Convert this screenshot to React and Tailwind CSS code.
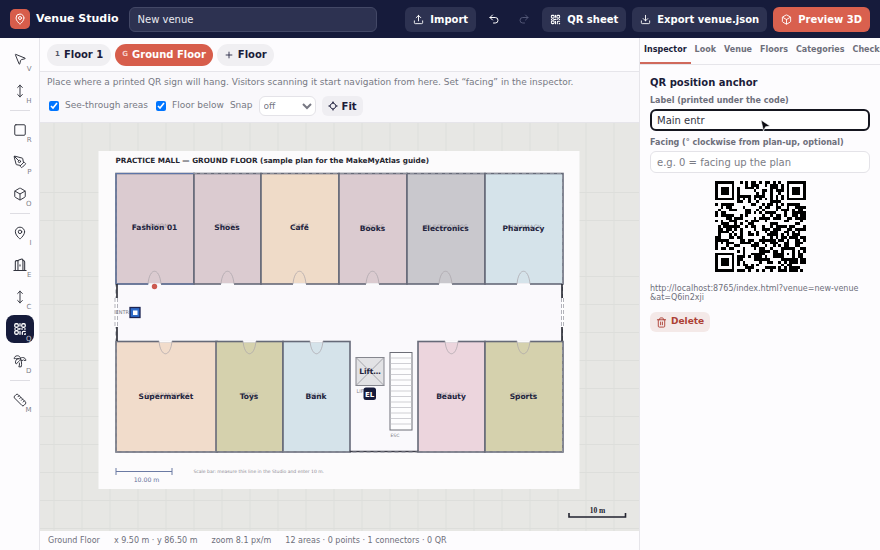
import React, { useState, useMemo } from "react";
import {
  Box,
  Download,
  MapPin,
  MousePointer2,
  MoveVertical,
  PenTool,
  Plus,
  Redo2,
  Ruler,
  Square,
  Trash2,
  TreePalm,
  Undo2,
  Upload,
} from "lucide-react";

const QR_SIZE = 33;

// GF(256) multiply used by the Reed-Solomon step
function gfMul(a, b) {
  let r = 0;
  for (let i = 7; i >= 0; i--) {
    r = (r << 1) ^ ((r >>> 7) * 0x11d);
    r ^= ((b >>> i) & 1) * a;
  }
  return r;
}

function rsRemainder(data, degree) {
  const gen = new Array(degree).fill(0);
  gen[degree - 1] = 1;
  let root = 1;
  for (let i = 0; i < degree; i++) {
    for (let j = 0; j < degree; j++) {
      gen[j] = gfMul(gen[j], root);
      if (j + 1 < degree) gen[j] ^= gen[j + 1];
    }
    root = gfMul(root, 2);
  }
  const rem = new Array(degree).fill(0);
  data.forEach((b) => {
    const factor = b ^ rem.shift();
    rem.push(0);
    gen.forEach((c, i) => {
      rem[i] ^= gfMul(c, factor);
    });
  });
  return rem;
}

// Version 4, level M: two blocks of 32 data bytes with 18 check bytes each
function qrCodewords(text) {
  const bits = [];
  const push = (val, len) => {
    for (let i = len - 1; i >= 0; i--) bits.push((val >>> i) & 1);
  };
  push(4, 4);
  push(text.length, 8);
  for (const ch of text) push(ch.charCodeAt(0), 8);
  push(0, Math.min(4, 512 - bits.length));
  while (bits.length % 8) bits.push(0);
  const bytes = [];
  for (let i = 0; i < bits.length; i += 8) {
    bytes.push(parseInt(bits.slice(i, i + 8).join(""), 2));
  }
  for (let pad = 0xec; bytes.length < 64; pad ^= 0xec ^ 0x11) bytes.push(pad);
  const a = bytes.slice(0, 32);
  const b = bytes.slice(32);
  const ea = rsRemainder(a, 18);
  const eb = rsRemainder(b, 18);
  const out = [];
  a.forEach((v, i) => out.push(v, b[i]));
  ea.forEach((v, i) => out.push(v, eb[i]));
  return out;
}

const MASKS = [
  (x, y) => (x + y) % 2 === 0,
  (x, y) => y % 2 === 0,
  (x) => x % 3 === 0,
  (x, y) => (x + y) % 3 === 0,
  (x, y) => (Math.floor(x / 3) + Math.floor(y / 2)) % 2 === 0,
  (x, y) => ((x * y) % 2) + ((x * y) % 3) === 0,
  (x, y) => (((x * y) % 2) + ((x * y) % 3)) % 2 === 0,
  (x, y) => (((x + y) % 2) + ((x * y) % 3)) % 2 === 0,
];

function buildMatrix(codewords, mask) {
  const n = QR_SIZE;
  const grid = Array.from({ length: n }, () => new Array(n).fill(null));
  const set = (x, y, v) => {
    if (x >= 0 && y >= 0 && x < n && y < n) grid[y][x] = v ? 1 : 0;
  };
  for (let i = 0; i < n; i++) {
    set(6, i, i % 2 === 0);
    set(i, 6, i % 2 === 0);
  }
  [[3, 3], [n - 4, 3], [3, n - 4]].forEach(([cx, cy]) => {
    for (let dy = -4; dy <= 4; dy++)
      for (let dx = -4; dx <= 4; dx++) {
        const d = Math.max(Math.abs(dx), Math.abs(dy));
        set(cx + dx, cy + dy, d !== 2 && d !== 4);
      }
  });
  for (let dy = -2; dy <= 2; dy++)
    for (let dx = -2; dx <= 2; dx++)
      set(26 + dx, 26 + dy, Math.max(Math.abs(dx), Math.abs(dy)) !== 1);

  let rem = mask;
  for (let i = 0; i < 10; i++) rem = (rem << 1) ^ ((rem >>> 9) * 0x537);
  const fmt = ((mask << 10) | rem) ^ 0x5412;
  const bit = (i) => (fmt >>> i) & 1;
  for (let i = 0; i <= 5; i++) set(8, i, bit(i));
  set(8, 7, bit(6));
  set(8, 8, bit(7));
  set(7, 8, bit(8));
  for (let i = 9; i < 15; i++) set(14 - i, 8, bit(i));
  for (let i = 0; i < 8; i++) set(n - 1 - i, 8, bit(i));
  for (let i = 8; i < 15; i++) set(8, n - 15 + i, bit(i));
  set(8, n - 8, 1);

  let k = 0;
  for (let right = n - 1; right >= 1; right -= 2) {
    if (right === 6) right = 5;
    for (let v = 0; v < n; v++)
      for (let j = 0; j < 2; j++) {
        const x = right - j;
        const up = ((right + 1) & 2) === 0;
        const y = up ? n - 1 - v : v;
        if (grid[y][x] !== null) continue;
        const byte = codewords[k >>> 3] || 0;
        const value = (byte >>> (7 - (k & 7))) & 1;
        grid[y][x] = value ^ (MASKS[mask](x, y) ? 1 : 0);
        k++;
      }
  }
  return grid;
}

function penalty(grid) {
  const n = QR_SIZE;
  const cols = grid.map((_, x) => grid.map((row) => row[x]));
  let score = 0;
  [...grid, ...cols].forEach((line) => {
    const s = line.join("");
    (s.match(/0{5,}|1{5,}/g) || []).forEach((m) => {
      score += m.length - 2;
    });
    for (let i = 0; i + 11 <= n; i++) {
      const part = s.slice(i, i + 11);
      if (part === "10111010000" || part === "00001011101") score += 40;
    }
  });
  for (let y = 0; y < n - 1; y++)
    for (let x = 0; x < n - 1; x++) {
      const sum =
        grid[y][x] + grid[y][x + 1] + grid[y + 1][x] + grid[y + 1][x + 1];
      if (sum === 0 || sum === 4) score += 3;
    }
  const dark = grid.flat().reduce((a, b) => a + b, 0);
  score += Math.floor(Math.abs((dark * 100) / (n * n) - 50) / 5) * 10;
  return score;
}

function QrCode({ text }) {
  const path = useMemo(() => {
    const words = qrCodewords(text);
    const best = MASKS.map((_, m) => buildMatrix(words, m)).sort(
      (a, b) => penalty(a) - penalty(b),
    )[0];
    return best
      .flatMap((row, y) => row.map((v, x) => (v ? `M${x} ${y}h1v1h-1z` : "")))
      .join("");
  }, [text]);

  return (
    <svg
      viewBox="0 0 33 33"
      className="w-[91px] h-[91px]"
      shapeRendering="crispEdges"
      role="img"
      aria-label="QR code"
    >
      <path d={path} fill="#000" />
    </svg>
  );
}

function QrIcon({ size = 14 }) {
  return (
    <svg width={size} height={size} viewBox="0 0 24 24" fill="none" stroke="currentColor" strokeWidth="2.2" strokeLinecap="round" strokeLinejoin="round">
      <rect x="3" y="3" width="6" height="6" rx="2" />
      <rect x="15" y="3" width="6" height="6" rx="2" />
      <rect x="3" y="15" width="6" height="6" rx="2" />
      <path d="M12 3v4M12 11v1H8M3 12h1M21 12h-1M16 12h-1M16 21v-3c0-1.500.5-2 2-2h3M21 20v1h-1M12 16v5" />
    </svg>
  );
}

function DoorIcon({ size = 14 }) {
  return (
    <svg width={size} height={size} viewBox="0 0 24 24" fill="none" stroke="currentColor" strokeWidth="1.8" strokeLinecap="round" strokeLinejoin="round">
      <path d="M1.5 21.500h21M4 21.500V6.500a2 2 0 0 1 2-2h2.500M17 4.500a2.500 2.500 0 0 1 3 2.500v14.500" />
      <path d="M8.500 21.500V5.500c0-1 .5-1.600 1.500-2l4-1.400c1.800-.6 3 0 3 1.700v17.700M12 11.500v2" />
    </svg>
  );
}

function FitIcon() {
  return (
    <svg width="10" height="10" viewBox="0 0 24 24" fill="none" stroke="currentColor" strokeWidth="2.4" strokeLinecap="round" strokeLinejoin="round">
      <path d="M12 4.500c3.500 1 6.500 4 7.500 7.500-1 3.500-4 6.500-7.500 7.500-3.500-1-6.500-4-7.500-7.500 1-3.500 4-6.500 7.500-7.500z" />
      <path d="M12 2v3M12 19v3M2 12h3M19 12h3" />
    </svg>
  );
}

const toolGroups = [
  [
    { key: "V", name: "Select", icon: MousePointer2 },
    { key: "H", name: "Pan", icon: MoveVertical },
  ],
  [
    { key: "R", name: "Rectangle", icon: Square },
    { key: "P", name: "Polygon", icon: PenTool },
    { key: "O", name: "Object", icon: Box },
  ],
  [
    { key: "I", name: "Point", icon: MapPin },
    { key: "E", name: "Entrance", icon: DoorIcon },
    { key: "C", name: "Connector", icon: MoveVertical },
    { key: "Q", name: "QR anchor", icon: QrIcon },
    { key: "D", name: "Decor", icon: TreePalm },
  ],
  [{ key: "M", name: "Measure", icon: Ruler }],
];

function ToolRail({ tool, onSelect }) {
  return (
    <nav className="w-10 shrink-0 border-r border-[#e6e5ea] bg-[#fdfcfe] flex flex-col items-center gap-1 pt-[7px]">
      {toolGroups.map((group, i) => (
        <React.Fragment key={i}>
          {i > 0 && <div className="w-5 h-px my-px shrink-0 bg-[#dedde3]" />}
          {group.map(({ key, name, icon: Icon }) => (
            <button
              key={key}
              aria-label={name}
              onClick={() => onSelect(key)}
              className={`relative w-7 h-7 shrink-0 rounded-lg flex items-center justify-center ${
                tool === key ? "bg-[#161b3b] text-white" : "text-[#33353f]"
              }`}
            >
              <Icon size={14} strokeWidth={1.7} />
              <span
                className={`absolute right-0.5 bottom-0 text-[7px] leading-2 ${
                  tool === key ? "text-[#c5c7d3]" : "text-[#7f808a]"
                }`}
              >
                {key}
              </span>
            </button>
          ))}
        </React.Fragment>
      ))}
    </nav>
  );
}

const rooms = [
  { name: "Fashion 01", print: "FASHION", x: 116, w: 78, top: true, door: 155, fill: "#dbcbd0" },
  { name: "Shoes", print: "SHOES", x: 194, w: 67, top: true, door: 228, fill: "#dbcbd0" },
  { name: "Café", print: "CAFE", x: 261, w: 78, top: true, door: 300, fill: "#efdbc8" },
  { name: "Books", print: "BOOKS", x: 339, w: 68, top: true, door: 373, fill: "#dbcbd0" },
  { name: "Electronics", print: "ELECTRONICS", x: 407, w: 78, top: true, door: 446, fill: "#c9c8cd" },
  { name: "Pharmacy", print: "PHARMACY", x: 485, w: 78, top: true, door: 524, fill: "#d5e3ea" },
  { name: "Supermarket", print: "SUPERMARKET", x: 116, w: 101, door: 166, fill: "#f1dccb" },
  { name: "Toys", print: "TOYS", x: 216, w: 67, door: 250, fill: "#d5d1ad" },
  { name: "Bank", print: "BANK", x: 283, w: 67, door: 317, fill: "#d5e3ea" },
  { name: "Beauty", print: "BEAUTY", x: 418, w: 67, door: 452, fill: "#ecd5dd" },
  { name: "Sports", print: "SPORTS", x: 485, w: 78, door: 524, fill: "#d5d1ad" },
];

function Room({ room }) {
  const y = room.top ? 173 : 341;
  const doorY = room.top ? 284 : 341;
  const tip = room.top ? 267 : 358;
  const cx = room.x + room.w / 2;
  const labelY = room.top ? (room.x < 339 ? 230 : 231) : 399;
  return (
    <g>
      <rect x={room.x + 0.5} y={y + 0.5} width={room.w} height={110.5} fill={room.fill} stroke="#666a78" strokeWidth="1.6" />
      <path d={`M${room.door - 6.5} ${doorY + 0.3}h13`} stroke="#fbfafc" strokeWidth="2.4" />
      <path
        d={`M${room.door - 6.5} ${doorY}C${room.door - 5} ${tip} ${room.door + 5} ${tip} ${room.door + 6.5} ${doorY}`}
        fill="none"
        stroke="#a9a3a9"
        strokeWidth="0.7"
      />
      <text x={cx + 1} y={labelY - 2} textAnchor="middle" fontSize="6" fill="#8a8790" opacity="0.8">
        {room.print}
      </text>
      <text x={cx} y={labelY} textAnchor="middle" fontSize="7.5" fontWeight="700" fill="#23243d">
        {room.name}
      </text>
    </g>
  );
}

function FloorPlan() {
  return (
    <svg
      viewBox="40 123 600 408"
      preserveAspectRatio="xMidYMid slice"
      className="absolute inset-0 w-full h-full"
    >
      <defs>
        <pattern id="grid" x="54" y="332" width="28" height="28" patternUnits="userSpaceOnUse">
          <path d="M0.5 0V28M0 0.5H28" stroke="#dddedb" fill="none" />
        </pattern>
      </defs>
      <rect x="40" y="123" width="600" height="408" fill="#e7e7e4" />
      <rect x="40" y="123" width="600" height="408" fill="url(#grid)" />
      <rect x="99" y="151" width="481" height="338" fill="#fcfbfc" />
      <text x="116" y="163" fontSize="7.25" fontWeight="700" fill="#25252f">
        PRACTICE MALL — GROUND FLOOR (sample plan for the MakeMyAtlas guide)
      </text>
      <rect x="117" y="174" width="446" height="278" fill="#faf9fc" />
      {rooms.map((room) => (
        <Room key={room.name} room={room} />
      ))}
      <path d="M350 451.5h69" stroke="#3c3d48" strokeWidth="1.6" />
      <path d="M116.5 173.5H563V452H116.5Z" fill="none" stroke="#8d909b" strokeWidth="1" strokeDasharray="4 3" />
      <path d="M116.5 284V173.5H194M116.5 284H149M162 284h32" fill="none" stroke="#5d75a8" />
      <path d="M117.5 284v14M117.5 327v14M562.5 284v14M562.5 327v14" stroke="#25262f" strokeWidth="1.6" />
      <path d="M116.5 298v29M563.5 298v29" stroke="#fff" strokeWidth="2" />
      <path d="M115.5 298v29M118 298v29M562 298v29M564 298v29" stroke="#a0a0a8" strokeWidth="0.8" strokeDasharray="4 2" />

      <rect x="356.5" y="357.5" width="28" height="28" fill="#e2e2e5" stroke="#85868e" />
      <path d="M356.5 357.5l28 28M384.5 357.5l-28 28" stroke="#94949b" strokeWidth="0.8" />
      <text x="370.5" y="373.5" textAnchor="middle" fontSize="7.5" fontWeight="700" fill="#23243d">
        Lift…
      </text>
      <text x="357" y="393" fontSize="5" fill="#85868e">LIFT</text>
      <rect x="364" y="387.5" width="12.5" height="12.5" rx="2.5" fill="#161b3b" />
      <text x="370.2" y="396.5" textAnchor="middle" fontSize="7" fontWeight="700" fill="#fff">EL</text>

      <rect x="390.5" y="352.5" width="22" height="77.5" fill="#fdfdfe" stroke="#6d6e77" />
      {Array.from({ length: 13 }, (_, i) => (
        <path key={i} d={`M391 ${358 + i * 5.5}h21`} stroke="#c3c3c9" strokeWidth="0.8" />
      ))}
      <text x="391" y="437" fontSize="4.5" fill="#777881">ESC</text>

      <circle cx="155" cy="286.5" r="2.7" fill="#cc5a50" />
      <text x="116" y="314" fontSize="5" fill="#777881">ENTR</text>
      <rect x="130.5" y="307.5" width="10" height="10" fill="#2f6cc9" stroke="#1b2350" strokeWidth="1.3" />
      <rect x="133.5" y="310.5" width="4.5" height="4.5" fill="#fff" />

      <path d="M116.5 468v7M172.5 468v7M116.5 471.5h56" stroke="#6b7aa3" fill="none" />
      <text x="147" y="482" textAnchor="middle" fontSize="6.2" fill="#64719a">10.00 m</text>
      <text x="194" y="473" fontSize="4.5" fill="#8c8c94">
        Scale bar: measure this line in the Studio and enter 10 m.
      </text>

      <path d="M569.5 513v4h56.5v-4" fill="none" stroke="#22232f" strokeWidth="1.6" />
      <text x="598" y="513" textAnchor="middle" fontSize="7.5" fontWeight="700" fill="#22232f" fontFamily="Liberation Serif, serif">
        10 m
      </text>
    </svg>
  );
}

const panelTabs = ["Inspector", "Look", "Venue", "Floors", "Categories", "Checks"];

function Inspector() {
  const [label, setLabel] = useState("Main entr");
  const [facing, setFacing] = useState("");

  return (
    <section className="px-[10px] pt-2.5 text-[#6e6f7b]">
      <h2 className="text-[10px] leading-4 font-bold text-[#1b1c3a]">QR position anchor</h2>
      <label htmlFor="qr-label" className="block mt-0.5 text-[8px] leading-4 font-bold">
        Label (printed under the code)
      </label>
      <div className="relative">
        <input
          id="qr-label"
          autoFocus
          value={label}
          onChange={(e) => setLabel(e.target.value)}
          className="block w-full h-[22px] px-[5px] rounded-md border-2 border-[#15161f] bg-white text-[10px] text-[#33343f] outline-none"
        />
        <svg width="11" height="13" viewBox="0 0 11 13" className="absolute left-1/2 top-2.5">
          <path d="M1 1l9 6-4.5.8L3.5 12z" fill="#0c0c12" stroke="#fff" strokeWidth="0.6" />
        </svg>
      </div>
      <label htmlFor="qr-facing" className="block mt-1 text-[8px] leading-4 font-bold">
        Facing (° clockwise from plan-up, optional)
      </label>
      <input
        id="qr-facing"
        value={facing}
        onChange={(e) => setFacing(e.target.value)}
        placeholder="e.g. 0 = facing up the plan"
        className="block w-full h-[22px] px-1.5 rounded-md border border-[#e4e3e8] bg-white text-[10px] placeholder:text-[#7b7c85] outline-none"
      />
      <div className="flex justify-center mt-2">
        <QrCode text="http://localhost:8765/index.html?venue=new-venue&at=Q6in2xji" />
      </div>
      <p className="mt-3 text-[8px] leading-[9px]">
        http://localhost:8765/index.html?venue=new-venue
        <wbr />
        &amp;at=Q6in2xji
      </p>
      <button className="mt-2.5 h-5 px-1.5 rounded-md bg-[#f4e9e8] flex items-center gap-1 text-[9px] font-bold text-[#ad4034]">
        <Trash2 size={11} />
        Delete
      </button>
    </section>
  );
}

function App() {
  const [tool, setTool] = useState("Q");
  const [tab, setTab] = useState("Inspector");
  const [venue, setVenue] = useState("New venue");
  const [seeThrough, setSeeThrough] = useState(true);
  const [floorBelow, setFloorBelow] = useState(true);

  const topButton =
    "h-[25px] px-2 rounded-md flex items-center gap-1.5 text-[10px] font-bold text-white whitespace-nowrap";

  return (
    <div className="h-screen flex flex-col overflow-hidden bg-[#fdfcfe] font-['DejaVu_Sans',sans-serif]">
      <header className="h-[38px] shrink-0 bg-[#161b3b] flex items-center px-2.5">
        <span className="w-5 h-5 rounded-[5px] bg-[#d75d4b] text-white flex items-center justify-center">
          <MapPin size={12} />
        </span>
        <h1 className="ml-1.5 text-[11px] font-bold text-white whitespace-nowrap">Venue Studio</h1>
        <input
          aria-label="Venue name"
          value={venue}
          onChange={(e) => setVenue(e.target.value)}
          className="ml-2.5 flex-1 max-w-[248px] min-w-0 h-[25px] px-2 rounded-md border border-[#434866] bg-[#2d3251] text-[10px] text-[#e9eaf0] outline-none"
        />
        <div className="ml-auto flex items-center gap-1.5">
          <button className={`${topButton} bg-[#2d3251]`}>
            <Upload size={11} />
            Import
          </button>
          <button aria-label="Undo" className="w-6 h-6 flex items-center justify-center text-white">
            <Undo2 size={12} />
          </button>
          <button aria-label="Redo" className="w-6 h-6 flex items-center justify-center text-[#525776]">
            <Redo2 size={12} />
          </button>
          <button className={`${topButton} bg-[#2d3251]`}>
            <QrIcon size={11} />
            QR sheet
          </button>
          <button className={`${topButton} bg-[#2d3251]`}>
            <Download size={11} />
            Export venue.json
          </button>
          <button className={`${topButton} bg-[#d9604e]`}>
            <Box size={11} />
            Preview 3D
          </button>
        </div>
      </header>

      <div className="flex-1 min-h-0 flex">
        <ToolRail tool={tool} onSelect={setTool} />

        <main className="flex-1 min-w-0 flex flex-col">
          <div className="h-[34px] shrink-0 flex items-center gap-1 px-[7px] border-b border-[#e6e5ea] text-[10px] font-bold text-[#1b1c3a]">
            <button className="h-[22px] px-2 rounded-full bg-[#f0eff2] flex items-center gap-1">
              <span className="text-[7px] text-[#555665]">1</span>
              Floor 1
            </button>
            <button className="h-[22px] px-[7px] rounded-full bg-[#d75d4b] text-white flex items-center gap-1">
              <span className="text-[7px] text-[#f5cfc9]">G</span>
              Ground Floor
            </button>
            <button className="h-[22px] px-[7px] rounded-full bg-[#f0eff2] flex items-center gap-1">
              <Plus size={10} />
              Floor
            </button>
          </div>

          <div className="shrink-0 px-[7px] pb-1.5 bg-[#f9f8fb] border-b border-[#e6e5ea] text-[9px] text-[#777883]">
            <p className="pt-0.5 leading-4">
              Place where a printed QR sign will hang. Visitors scanning it start navigation from
              here. Set “facing” in the inspector.
            </p>
            <div className="mt-1.5 pl-0.5 flex items-center">
              <label className="flex items-center gap-1.5">
                <input
                  type="checkbox"
                  checked={seeThrough}
                  onChange={(e) => setSeeThrough(e.target.checked)}
                  className="w-2.5 h-2.5"
                />
                See-through areas
              </label>
              <label className="ml-2 flex items-center gap-1.5">
                <input
                  type="checkbox"
                  checked={floorBelow}
                  onChange={(e) => setFloorBelow(e.target.checked)}
                  className="w-2.5 h-2.5"
                />
                Floor below
              </label>
              <label htmlFor="snap" className="ml-1.5">
                Snap
              </label>
              <select
                id="snap"
                defaultValue="off"
                className="ml-1.5 w-[57px] h-5 rounded-md border border-[#e4e3e8] bg-white text-[9px]"
              >
                <option value="off">off</option>
                <option value="1">1 m</option>
              </select>
              <button className="ml-1.5 h-5 px-1.5 rounded-md bg-[#efeef2] flex items-center gap-1 text-[10px] font-bold text-[#1b1c3a]">
                <FitIcon />
                Fit
              </button>
            </div>
          </div>

          <div className="relative flex-1 min-h-0">
            <FloorPlan />
          </div>

          <footer className="h-[19px] shrink-0 px-2 flex items-center gap-3.5 text-[8px] text-[#6e6f7b]">
            <span>Ground Floor</span>
            <span>x 9.50 m · y 86.50 m</span>
            <span>zoom 8.1 px/m</span>
            <span>12 areas · 0 points · 1 connectors · 0 QR</span>
          </footer>
        </main>

        <aside className="w-[241px] shrink-0 border-l border-[#e6e5ea]">
          <div role="tablist" className="flex overflow-hidden border-b border-[#e6e5ea]">
            {panelTabs.map((name) => (
              <button
                key={name}
                role="tab"
                aria-selected={tab === name}
                onClick={() => setTab(name)}
                className={`h-[26px] px-1 shrink-0 border-b-2 text-[8px] font-bold ${
                  tab === name
                    ? "border-[#d0695c] text-[#1b1c3a]"
                    : "border-transparent text-[#6e6f7b]"
                }`}
              >
                {name}
              </button>
            ))}
          </div>
          <Inspector />
        </aside>
      </div>
    </div>
  );
}

export default App;
